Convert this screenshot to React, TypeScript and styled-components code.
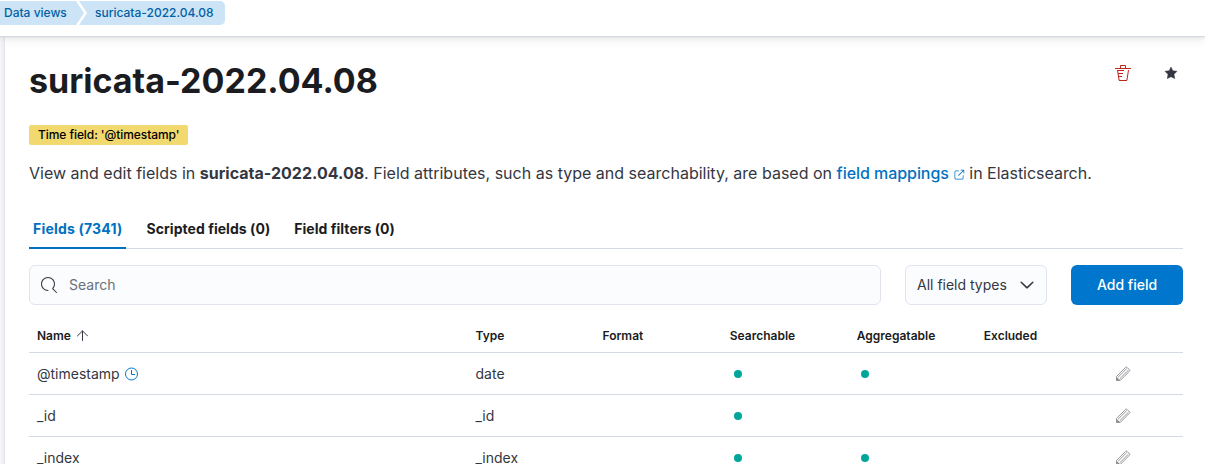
import React from "react";
import styled, { createGlobalStyle, css } from "styled-components";

const GlobalStyle = createGlobalStyle`
  * { box-sizing: border-box; }
  html, body { margin: 0; height: 464px; overflow: hidden; background: #fff; }
  body { font-family: Inter, "Liberation Sans", sans-serif; font-size: 14px; color: #343741; letter-spacing: 0; }
  #root { height: 464px; }
`;

const Page = styled.div`
  display: flex;
  flex-direction: column;
  height: 464px;
  overflow: hidden;
`;

const Header = styled.header`
  flex: none;
  height: 37px;
  padding-top: 1px;
  display: flex;
  align-items: flex-start;
  background: #fff;
  border-bottom: 1px solid #d3dae6;
  box-shadow: 0 0.7px 1.4px rgba(0, 0, 0, 0.07), 0 1.9px 4px rgba(0, 0, 0, 0.05), 0 4.5px 10px rgba(0, 0, 0, 0.05);
  z-index: 1;
`;

const Crumb = styled.a<{ $last?: boolean }>`
  height: 24px;
  line-height: 24px;
  font-size: 12px;
  font-weight: 500;
  color: #0061a6;
  background: #cce4f5;
  white-space: nowrap;
  ${(p) =>
    p.$last
      ? css`
          width: 146px;
          margin-left: -5px;
          padding-left: 16px;
          border-radius: 0 5px 5px 0;
          clip-path: polygon(0 0, 100% 0, 100% 100%, 0 100%, 8px 50%);
        `
      : css`
          width: 84px;
          padding-left: 4px;
          clip-path: polygon(0 0, calc(100% - 8px) 0, 100% 50%, calc(100% - 8px) 100%, 0 100%);
        `}
`;

const Body = styled.div`
  flex: 1;
  min-height: 0;
  display: flex;
  padding-left: 5px;
  background: #f7f8fb;
`;

const Panel = styled.main`
  flex: 1;
  height: 440px;
  padding: 24px 22px 0 24px;
  background: #fff;
  box-shadow: 0 0 4px rgba(0, 0, 0, 0.1), 0 2px 12px rgba(0, 0, 0, 0.05);
`;

const TitleRow = styled.div`
  display: flex;
  justify-content: space-between;
  height: 40px;
`;

const Title = styled.h1`
  margin: 0;
  font-size: 34px;
  line-height: 40px;
  font-weight: 700;
  color: #1a1c21;
`;

const Actions = styled.div`
  display: flex;
  gap: 32px;
  padding: 4px 4px 0 0;
  height: 24px;
`;

const Badge = styled.span`
  display: block;
  width: 159px;
  height: 20px;
  margin-top: 24px;
  padding-left: 9px;
  border-radius: 2px;
  background: #f1d86f;
  color: #000;
  font-size: 12px;
  font-weight: 500;
  letter-spacing: -0.07px;
  line-height: 20px;
  white-space: nowrap;
`;

const Intro = styled.p`
  margin: 16px 0 0;
  font-size: 16px;
  line-height: 24px;
  letter-spacing: 0.008px;
  white-space: nowrap;
`;

const Link = styled.a`
  color: #0071c2;
  font-weight: 500;
  letter-spacing: -0.05px;
  svg { margin: 0 0 0 4px; vertical-align: -2px; }
`;

const Tail = styled.span`
  letter-spacing: -0.03px;
`;

const Tabs = styled.nav`
  display: flex;
  gap: 16px;
  height: 40px;
  margin-top: 24px;
  box-shadow: inset 0 -1px 0 #d3dae6;
`;

const Tab = styled.button<{ $active?: boolean }>`
  padding: 0 4px;
  border: 0;
  background: none;
  font: 700 14px/40px Inter, sans-serif;
  letter-spacing: ${(p) => (p.$active ? "0.2px" : "0.045px")};
  color: ${(p) => (p.$active ? "#0071c2" : "#1a1c21")};
  box-shadow: ${(p) => (p.$active ? "inset 0 -2px 0 #0071c2" : "none")};
`;

const Toolbar = styled.div`
  display: flex;
  gap: 24px;
  height: 40px;
  margin-top: 16px;
`;

const Control = styled.div`
  display: flex;
  align-items: center;
  border: 1px solid #e1e4ef;
  border-radius: 6px;
  background: #fbfcfd;
  span { padding-bottom: 2px; }
`;

const SearchBox = styled(Control)`
  flex: 1;
  gap: 12px;
  padding-left: 11px;
  color: #69707d;
`;

const TypeFilter = styled(Control)`
  width: 142px;
  justify-content: space-between;
  padding: 0 11px;
`;

const AddButton = styled.button`
  width: 112px;
  padding: 0 0 2px;
  border: 0;
  border-radius: 6px;
  background: #0077cc;
  color: #fff;
  font: 500 14px Inter, sans-serif;
`;

const Row = styled.div<{ $head?: boolean }>`
  display: grid;
  grid-template-columns: 438.5px 127px 127.3px 127px 127px 127px 1fr;
  align-items: center;
  height: ${(p) => (p.$head ? "34px" : "42px")};
  padding-left: 8px;
  border-bottom: 1px solid #d3dae6;
  ${(p) => p.$head && css`
    margin-top: 14px;
    font-size: 12px;
    font-weight: 600;
    color: #1a1c21;
  `}
`;

const Cell = styled.div`
  display: flex;
  align-items: center;
  gap: 5px;
  svg { flex: none; }
`;

const Dot = styled.i`
  width: 8px;
  height: 8px;
  margin-left: 4px;
  border-radius: 50%;
  background: #00a69b;
`;

const EditCell = styled(Cell)`
  padding-left: 4.2px;
  color: #8a8c91;
`;

const TrashIcon = () => (
  <svg width="16" height="16" viewBox="0 0 16 16" fill="#bd271e">
    <path d="M11 3h5v1H0V3h5V1a1 1 0 0 1 1-1h4a1 1 0 0 1 1 1v2zm-7.056 8H7v1H4.1l.392 2.519c.042.269.254.458.493.458h6.03c.239 0 .451-.189.493-.458l1.498-9.576H14l-1.504 9.73c-.116.747-.74 1.304-1.481 1.304h-6.03c-.741 0-1.365-.557-1.481-1.304l-1.511-9.73H9V5.95H3.157L3.476 8H8v1H3.632l.312 2zM6 3h4V1H6v2z" />
  </svg>
);

const StarIcon = () => (
  <svg width="16" height="16" viewBox="0 0 16 16" fill="#343741" stroke="#343741" strokeWidth=".5" strokeLinejoin="round">
    <path d="M8 2l1.8 3.7 4.2.6-3 3 .7 4.3L8 11.7l-3.7 1.9.7-4.3-3-3 4.2-.6z" />
  </svg>
);

const SearchIcon = () => (
  <svg width="16" height="16" viewBox="0 0 16 16" fill="#343741">
    <path d="M11.271 11.978l3.872 3.873a.502.502 0 0 0 .708 0 .502.502 0 0 0 0-.708l-3.565-3.564c2.38-2.747 2.267-6.923-.342-9.532-2.73-2.73-7.17-2.73-9.898 0-2.728 2.729-2.728 7.17 0 9.9a6.955 6.955 0 0 0 4.949 2.05.5.5 0 0 0 0-1 5.96 5.96 0 0 1-4.242-1.757 6.01 6.01 0 0 1 0-8.486 6.004 6.004 0 0 1 8.484 0 6.01 6.01 0 0 1 0 8.486.5.5 0 0 0 .034.738z" />
  </svg>
);

const ChevronIcon = () => (
  <svg width="16" height="16" viewBox="0 0 16 16" fill="none" stroke="#343741" strokeWidth="1.5" strokeLinecap="round" strokeLinejoin="round">
    <path d="M2.2 5.2L7.5 10.4Q8 10.9 8.5 10.4L13.8 5.2" />
  </svg>
);

const ExternalIcon = () => (
  <svg width="12" height="12" viewBox="0 0 16 16" fill="#0071c2">
    <path d="M13 8.5a.5.5 0 1 1 1 0V12a2 2 0 0 1-2 2H4a2 2 0 0 1-2-2V4a2 2 0 0 1 2-2h3.5a.5.5 0 0 1 0 1H4a1 1 0 0 0-1 1v8a1 1 0 0 0 1 1h8a1 1 0 0 0 1-1V8.5zm-5.12.339a.5.5 0 1 1-.706-.707L13.305 2H10.5a.5.5 0 1 1 0-1H14a1 1 0 0 1 1 1v3.5a.5.5 0 1 1-1 0V2.72L7.88 8.838z" />
  </svg>
);

const SortIcon = () => (
  <svg width="12" height="12" viewBox="0 0 12 12" fill="none" stroke="#343741" strokeLinecap="round">
    <path d="M6.5 10.5V1M1.4 6L6.5 .9 11.6 6" />
  </svg>
);

const ClockIcon = () => (
  <svg width="14" height="14" viewBox="0 0 14 14" fill="none" stroke="#0077cc">
    <circle cx="6.5" cy="7" r="6" />
    <path d="M6.5 3v4.5h3.5" />
  </svg>
);

const PencilIcon = () => (
  <svg width="16" height="16" viewBox="0 0 16 16" fill="none" stroke="currentColor">
    <path d="M1.5 10.4L10.7 1.3q.7-.6 1.3 0l2.5 2.5q.6.7 0 1.3L5.4 14.3l-3.9.2zM3.1 11.2l8.7-8.7M4.7 12.8l8.8-8.7" strokeWidth=".9" />
    <path d="M1.4 10.8l3.8 3.7H1.4z" fill="currentColor" stroke="none" />
  </svg>
);

const columns = ["Type", "Format", "Searchable", "Aggregatable", "Excluded"];

const fields = [
  { name: "@timestamp", type: "date", time: true, aggregatable: true },
  { name: "_id", type: "_id", time: false, aggregatable: false },
  { name: "_index", type: "_index", time: false, aggregatable: true },
];

export default function App() {
  return (
    <Page>
      <GlobalStyle />
      <Header>
        <Crumb>Data views</Crumb>
        <Crumb $last>suricata-2022.04.08</Crumb>
      </Header>
      <Body>
        <Panel>
          <TitleRow>
            <Title>suricata-2022.04.08</Title>
            <Actions>
              <TrashIcon />
              <StarIcon />
            </Actions>
          </TitleRow>
          <Badge>Time field: '@timestamp'</Badge>
          <Intro>
            View and edit fields in <b>suricata-2022.04.08</b>. Field attributes, such as type and searchability, are
            based on <Link>field mappings<ExternalIcon /></Link><Tail> in Elasticsearch.</Tail>
          </Intro>
          <Tabs>
            <Tab $active>Fields (7341)</Tab>
            <Tab>Scripted fields (0)</Tab>
            <Tab>Field filters (0)</Tab>
          </Tabs>
          <Toolbar>
            <SearchBox>
              <SearchIcon />
              <span>Search</span>
            </SearchBox>
            <TypeFilter>
              <span>All field types</span>
              <ChevronIcon />
            </TypeFilter>
            <AddButton>Add field</AddButton>
          </Toolbar>
          <Row $head>
            <Cell>Name <SortIcon /></Cell>
            {columns.map((c) => (
              <Cell key={c}>{c}</Cell>
            ))}
          </Row>
          {fields.map((f) => (
            <Row key={f.name}>
              <Cell>
                {f.name}
                {f.time && <ClockIcon />}
              </Cell>
              <Cell>{f.type}</Cell>
              <Cell />
              <Cell><Dot /></Cell>
              <Cell>{f.aggregatable && <Dot />}</Cell>
              <Cell />
              <EditCell><PencilIcon /></EditCell>
            </Row>
          ))}
        </Panel>
      </Body>
    </Page>
  );
}
